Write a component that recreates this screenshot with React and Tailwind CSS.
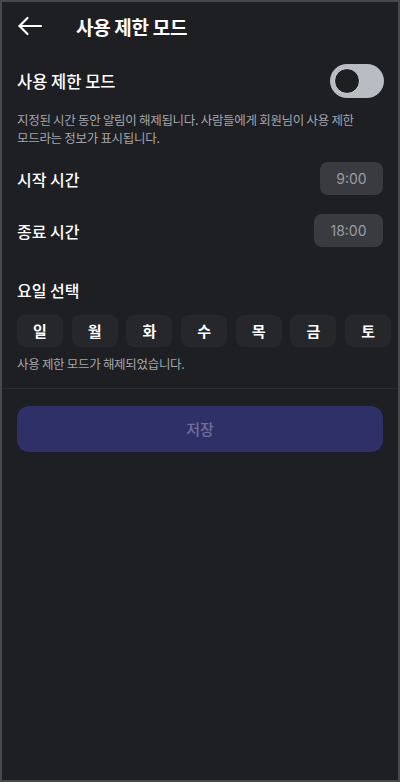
import React from "react";

const days = ["일", "월", "화", "수", "목", "금", "토"];

export default function App() {
  return (
    <div
      className="w-[400px] h-[782px] border-2 border-[#47484a] bg-[#1d1f23] overflow-hidden text-white"
      style={{ fontFamily: '"Noto Sans CJK KR", "Noto Sans", sans-serif' }}
    >
      <div className="flex items-center h-[48px] pl-[15px]">
        <svg width="26" height="20" viewBox="0 0 26 20" fill="none" stroke="white" strokeWidth="2.2" strokeLinecap="round" strokeLinejoin="round">
          <path d="M24 10H2.5" />
          <path d="M10.5 2L2.5 10L10.5 18" />
        </svg>
        <div className="ml-[33px] text-[19px] font-bold leading-none tracking-[-0.3px]">사용 제한 모드</div>
      </div>

      <div className="px-[15px]">
        <div className="flex items-center justify-between mt-[14px] h-[34px]">
          <div className="text-[16.5px] font-medium">사용 제한 모드</div>
          <div className="w-[54px] h-[34px] rounded-full bg-[#b9bcc3] flex items-center px-[4px] mr-[-1px]">
            <div className="w-[26px] h-[26px] rounded-full bg-[#1d1f23] border-[1.5px] border-[#d6d8dc]" />
          </div>
        </div>

        <p className="mt-[13px] pr-[20px] text-[12.5px] leading-[17.5px] text-[#a3a6ab] tracking-[-0.3px] break-keep">
          지정된 시간 동안 알림이 해제됩니다. 사람들에게 회원님이 사용 제한 모드라는 정보가 표시됩니다.
        </p>

        <div className="flex items-center justify-between mt-[16px] h-[33px]">
          <div className="text-[16px] font-medium">시작 시간</div>
          <div className="w-[63px] h-[33px] rounded-[8px] bg-[#393b41] flex items-center justify-center text-[14px] text-[#9a9da3]" style={{ fontFamily: "Inter, sans-serif" }}>
            9:00
          </div>
        </div>

        <div className="flex items-center justify-between mt-[19px] h-[33px]">
          <div className="text-[16px] font-medium">종료 시간</div>
          <div className="w-[69px] h-[33px] rounded-[8px] bg-[#393b41] flex items-center justify-center text-[14px] text-[#9a9da3]" style={{ fontFamily: "Inter, sans-serif" }}>
            18:00
          </div>
        </div>

        <div className="mt-[31px] text-[16px] font-medium leading-[24px]">요일 선택</div>

        <div className="flex gap-[8.7px] mt-[13px] w-[400px]">
          {days.map((d) => (
            <div
              key={d}
              className="shrink-0 w-[46px] h-[32px] rounded-[8px] bg-[#25272b] flex items-center justify-center text-[15px] font-bold"
            >
              {d}
            </div>
          ))}
        </div>

        <div className="mt-[8px] text-[12.5px] text-[#a3a6ab] leading-[18px] tracking-[-0.3px]">
          사용 제한 모드가 해제되었습니다.
        </div>
      </div>

      <div className="mt-[15px] h-px bg-[#2a2c31]" />

      <div className="px-[15px] pt-[17px]">
        <div className="h-[46px] rounded-[12px] bg-[#2f3068] flex items-center justify-center text-[15px] font-medium text-[#6f709b]">
          저장
        </div>
      </div>
    </div>
  );
}
